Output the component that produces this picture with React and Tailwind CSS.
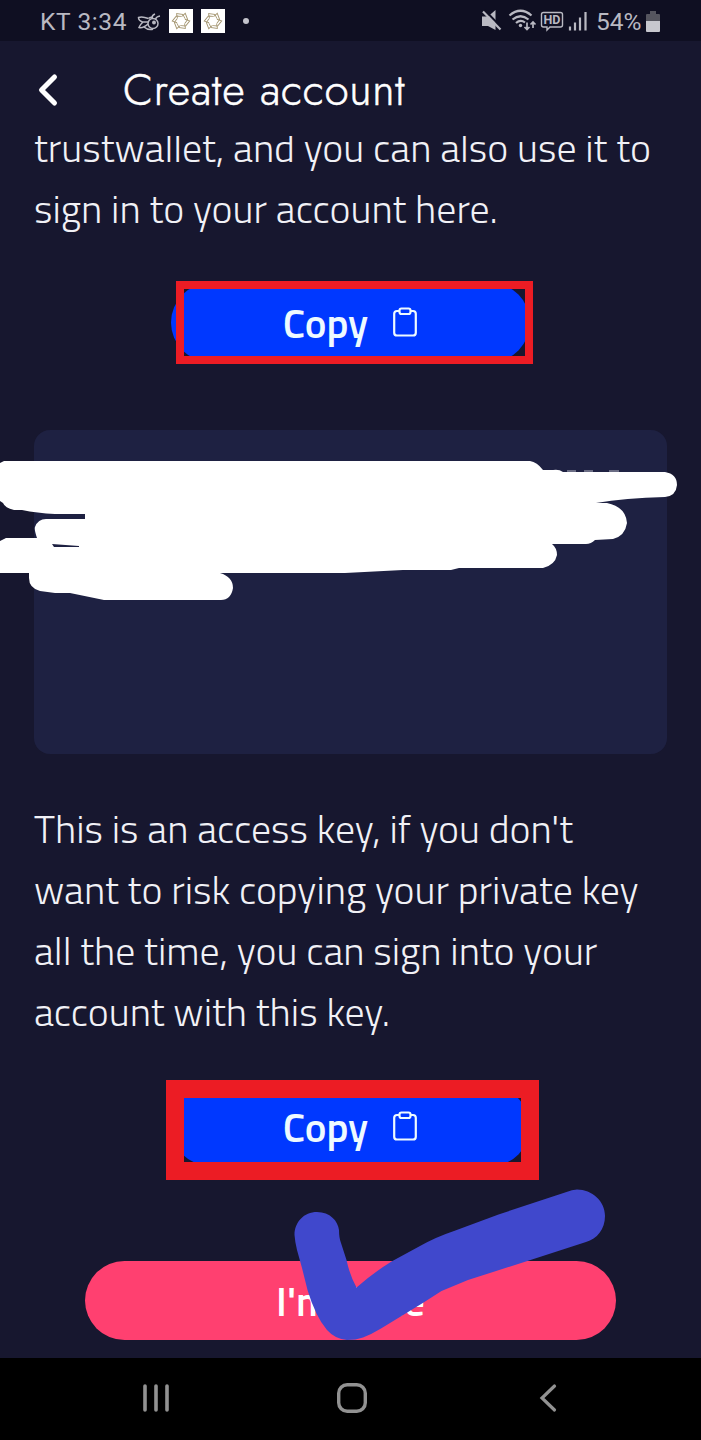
import { ChevronLeft } from "lucide-react";

const accountLines = [
  "trustwallet, and you can also use it to",
  "sign in to your account here.",
];

const accessLines = [
  "This is an access key, if you don't",
  "want to risk copying your private key",
  "all the time, you can sign into your",
  "account with this key.",
];

function Emblem() {
  return (
    <svg viewBox="0 0 24 24" className="w-6 h-6 bg-white" fill="none" stroke="#a3946f" strokeWidth="0.9">
      {[0, 60, 120, 180, 240, 300].map((angle) => (
        <path key={angle} d="M8.500 9.500L7.500 4.500L14 5.500L16 9.700" transform={`rotate(${angle} 12 12)`} />
      ))}
    </svg>
  );
}

function StatusBar() {
  return (
    <div className="h-[41px] shrink-0 bg-[#0f0f22] flex items-center text-[#b9b9c2] font-[Roboto,sans-serif] text-[24.5px] leading-none">
      <span className="ml-10 mt-1 w-[97px] whitespace-nowrap tracking-[0.6px]">KT 3:34</span>
      <svg viewBox="0 0 24 20" className="w-6 h-5 mt-0.5" fill="none" stroke="currentColor" strokeWidth="1.5">
        <path d="M11.500 6.500Q5 4 1.500 5.500q0 3 4 4.500h5.500M6 10Q3 12.500 2 15.500q4 1 9-3.500" />
        <path d="M7 15q4 3.500 9 2.300M11.500 6.500q2-1.500 4.500-1" />
        <circle cx="16" cy="11.500" r="5" />
        <path d="M15 6q0-3 3-4M18.500 7q1-2.500 4.500-3" />
        <circle cx="17" cy="10.500" r="1.200" fill="currentColor" />
      </svg>
      <div className="ml-2 mt-px flex gap-2">
        <Emblem />
        <Emblem />
      </div>
      <span className="ml-[18px] size-1.5 rounded-full bg-[#c4c4cc]" />
      <svg viewBox="0 0 118 24" className="ml-auto w-[118px] h-6 mt-px" fill="none" stroke="currentColor" strokeWidth="1.8">
        <path d="M0 7.500h6L13.500 1v20L6 17H0z" fill="currentColor" stroke="none" />
        <path d="M2.500 1l18 18.500" stroke="#0f0f22" strokeWidth="2.200" />
        <path d="M1 2.500l17.500 18" strokeWidth="2.200" />
        <path d="M27.500 6.500q11-9.500 22 0M30.500 10.500q8-6.500 16 0M34 14q4.500-4 9-.5" strokeWidth="2.200" />
        <circle cx="38.500" cy="16.500" r="1.700" fill="currentColor" stroke="none" />
        <path d="M45 13.500v7m-2.500-2.500L45 20.500l2.500-2.500M51 19v-6m-2.500 2.500L51 13l2.500 2.500" strokeWidth="1.700" />
        <path d="M61.500 3.500h17q2 0 2 2v10.500q0 2-2 2H68l-3 3v-3h-3.500q-2 0-2-2V5.500q0-2 2-2z" strokeWidth="1.400" />
        <path d="M88 17.500v4M93 13.500v8M98 8.500v13M103.500 3v18.500" strokeWidth="2.200" />
        <text x="61.500" y="15.300" fontSize="12.500" fontWeight="700" fill="currentColor" stroke="none">HD</text>
      </svg>
      <span className="-ml-1 mt-1 w-[46px] whitespace-nowrap">54%</span>
      <svg viewBox="0 0 14 22" className="ml-1 mr-[41px] w-3.5 h-[22px] mt-0.5">
        <path d="M4 0h6v3h3q1 0 1 1v6H0V4q0-1 1-1h3z" fill="#55555f" />
        <path d="M0 10h14v10q0 1-1 1H1q-1 0-1-1z" fill="#c7c7ce" />
      </svg>
    </div>
  );
}

function Paragraph({ lines }) {
  return (
    <p className="font-['Titillium_Web','Open_Sans',sans-serif] font-light text-[39.85px] leading-[61.25px] text-[#f1f1f6]">
      {lines.map((line) => (
        <span key={line} className="block whitespace-nowrap">
          {line}
        </span>
      ))}
    </p>
  );
}

function CopyButton() {
  return (
    <button className="w-[359px] h-[79px] rounded-full bg-[#0038ff] flex items-center justify-center text-[#eefaff]">
      <span className="mt-0.5 -ml-px font-['Titillium_Web','Noto_Sans',sans-serif] font-semibold text-[41px] leading-none">Copy</span>
      <svg viewBox="0 0 24 30" className="ml-[25px] w-6 h-[30px]" fill="none" stroke="currentColor" strokeWidth="2.200">
        <path d="M6 4H4Q1.200 4 1.200 6.800v18.900Q1.200 28.500 4 28.500h16q2.800 0 2.800-2.800V6.800Q22.800 4 20 4H18" />
        <rect x="6.500" y="1.500" width="11" height="5.500" rx="2" />
      </svg>
    </button>
  );
}

// White marker strokes hiding the private key
function Scribble() {
  return (
    <svg viewBox="0 0 701 160" className="absolute -left-[34px] top-[20px] w-[701px] h-[160px]" fill="#fff">
      <path d="M0 13L4 11H530Q537 12 543 20H553Q559 19 563 22H665Q677 24 677 35Q676 46 665 47Q625 48 596 53H607Q626 57 627 73Q625 86 613 89L595 90Q591 94 586 94H552Q557 98 557 105Q555 115 543 118H459L451 120H403L345 123H220Q233 127 233 138Q231 150 221 150H104L70 143H55L40 141Q29 138 29 128V123H0V91L6 88H37Q34 79 35 77Q38 69 46 69H85V64H55Q37 63 22 60H14Q5 58 3 53L0 51Z" />
      <path d="M567 21h9M584 21h9M609 21h10" stroke="#b8bac7" strokeWidth="1" />
      <path d="M52 94L79 96V97H54Z" fill="#1e2142" />
    </svg>
  );
}

function NavBar() {
  return (
    <div className="h-[82px] shrink-0 bg-black flex items-center text-[#929292]">
      <svg viewBox="0 0 28 30" className="ml-[142px] w-7 h-[30px] -mt-0.5" stroke="currentColor" strokeWidth="3.600" strokeLinecap="round">
        <path d="M3 3v24M14 3v24M25 3v24" />
      </svg>
      <svg viewBox="0 0 30 30" className="ml-[167px] w-[30px] h-[30px] -mt-0.5" fill="none" stroke="currentColor" strokeWidth="3.400">
        <rect x="1.700" y="1.700" width="26.600" height="26.600" rx="8.500" />
      </svg>
      <svg viewBox="0 0 18 30" className="ml-[172px] w-[18px] h-[30px] -mt-0.5" fill="none" stroke="currentColor" strokeWidth="3.200" strokeLinecap="round">
        <path d="M15.500 3L3 15l12.500 12" />
      </svg>
    </div>
  );
}

export default function App() {
  return (
    <div className="w-[701px] h-[1440px] overflow-hidden flex flex-col bg-[#17172f]">
      <StatusBar />

      <header className="h-[95px] shrink-0 flex items-center text-white">
        <ChevronLeft className="ml-[22px] mt-0.5 size-[52px]" strokeWidth={2.3} />
        <h1 className="ml-[49px] mt-[3px] font-[Jost,Lato,sans-serif] font-light text-[44px] leading-none whitespace-nowrap tracking-[0.6px] [word-spacing:1px] [-webkit-text-stroke:0.5px_white]">
          Create account
        </h1>
      </header>

      <main className="flex-1 min-h-0 overflow-hidden">
        <div className="-mt-[19px] px-[34px] flex flex-col">
          <Paragraph lines={accountLines} />

          <div className="relative mt-[43px] self-center">
            <CopyButton />
            <div className="absolute left-[5px] -top-[2px] w-[357px] h-[83px] border-8 border-[#ec1c24]" />
          </div>

          <div className="relative mt-[68px] h-[324px] rounded-2xl bg-[#1e2142]">
            <Scribble />
          </div>

          <div className="mt-[44px]">
            <Paragraph lines={accessLines} />
          </div>

          <div className="relative mt-[44px] self-center">
            <CopyButton />
            <div className="absolute -left-[5px] -top-[7px] w-[373px] h-[100px] border-[18px] border-[#ec1c24]" />
          </div>

          <div className="relative mt-[95px] self-center">
            <button className="w-[531px] h-[79px] pt-[3px] rounded-full bg-[#ff4070] text-white font-['Titillium_Web','Noto_Sans',sans-serif] font-semibold text-[40.5px] leading-none">
              I'm done
            </button>
            {/* blue check drawn across the button */}
            <svg viewBox="0 0 531 155" className="absolute left-0 -top-[74px] w-[531px] h-[155px]" fill="#4048cc">
              <path d="M209.500 48C209.500 35 219 25 232 25S253 34 254 43Q254 51 256 56L261.500 73Q265 89 271.500 100.500Q288 86 306.500 74.500L335 59Q351 50 369 44L413.500 27.500L481.500 5Q487 2.500 492 2.500C507 2.500 520 14 520 29C520 42 512 52 501 55L445.500 73L383 93L356.500 104L337 116.500L296 141.500Q287 147 278 150.500Q271 153 262 153Q250 152 242 143Q236 136 231.500 126.500Q226 115 222.500 103L217 81L212 63Q210 55 209.500 48Z" />
            </svg>
          </div>
        </div>
      </main>

      <NavBar />
    </div>
  );
}
